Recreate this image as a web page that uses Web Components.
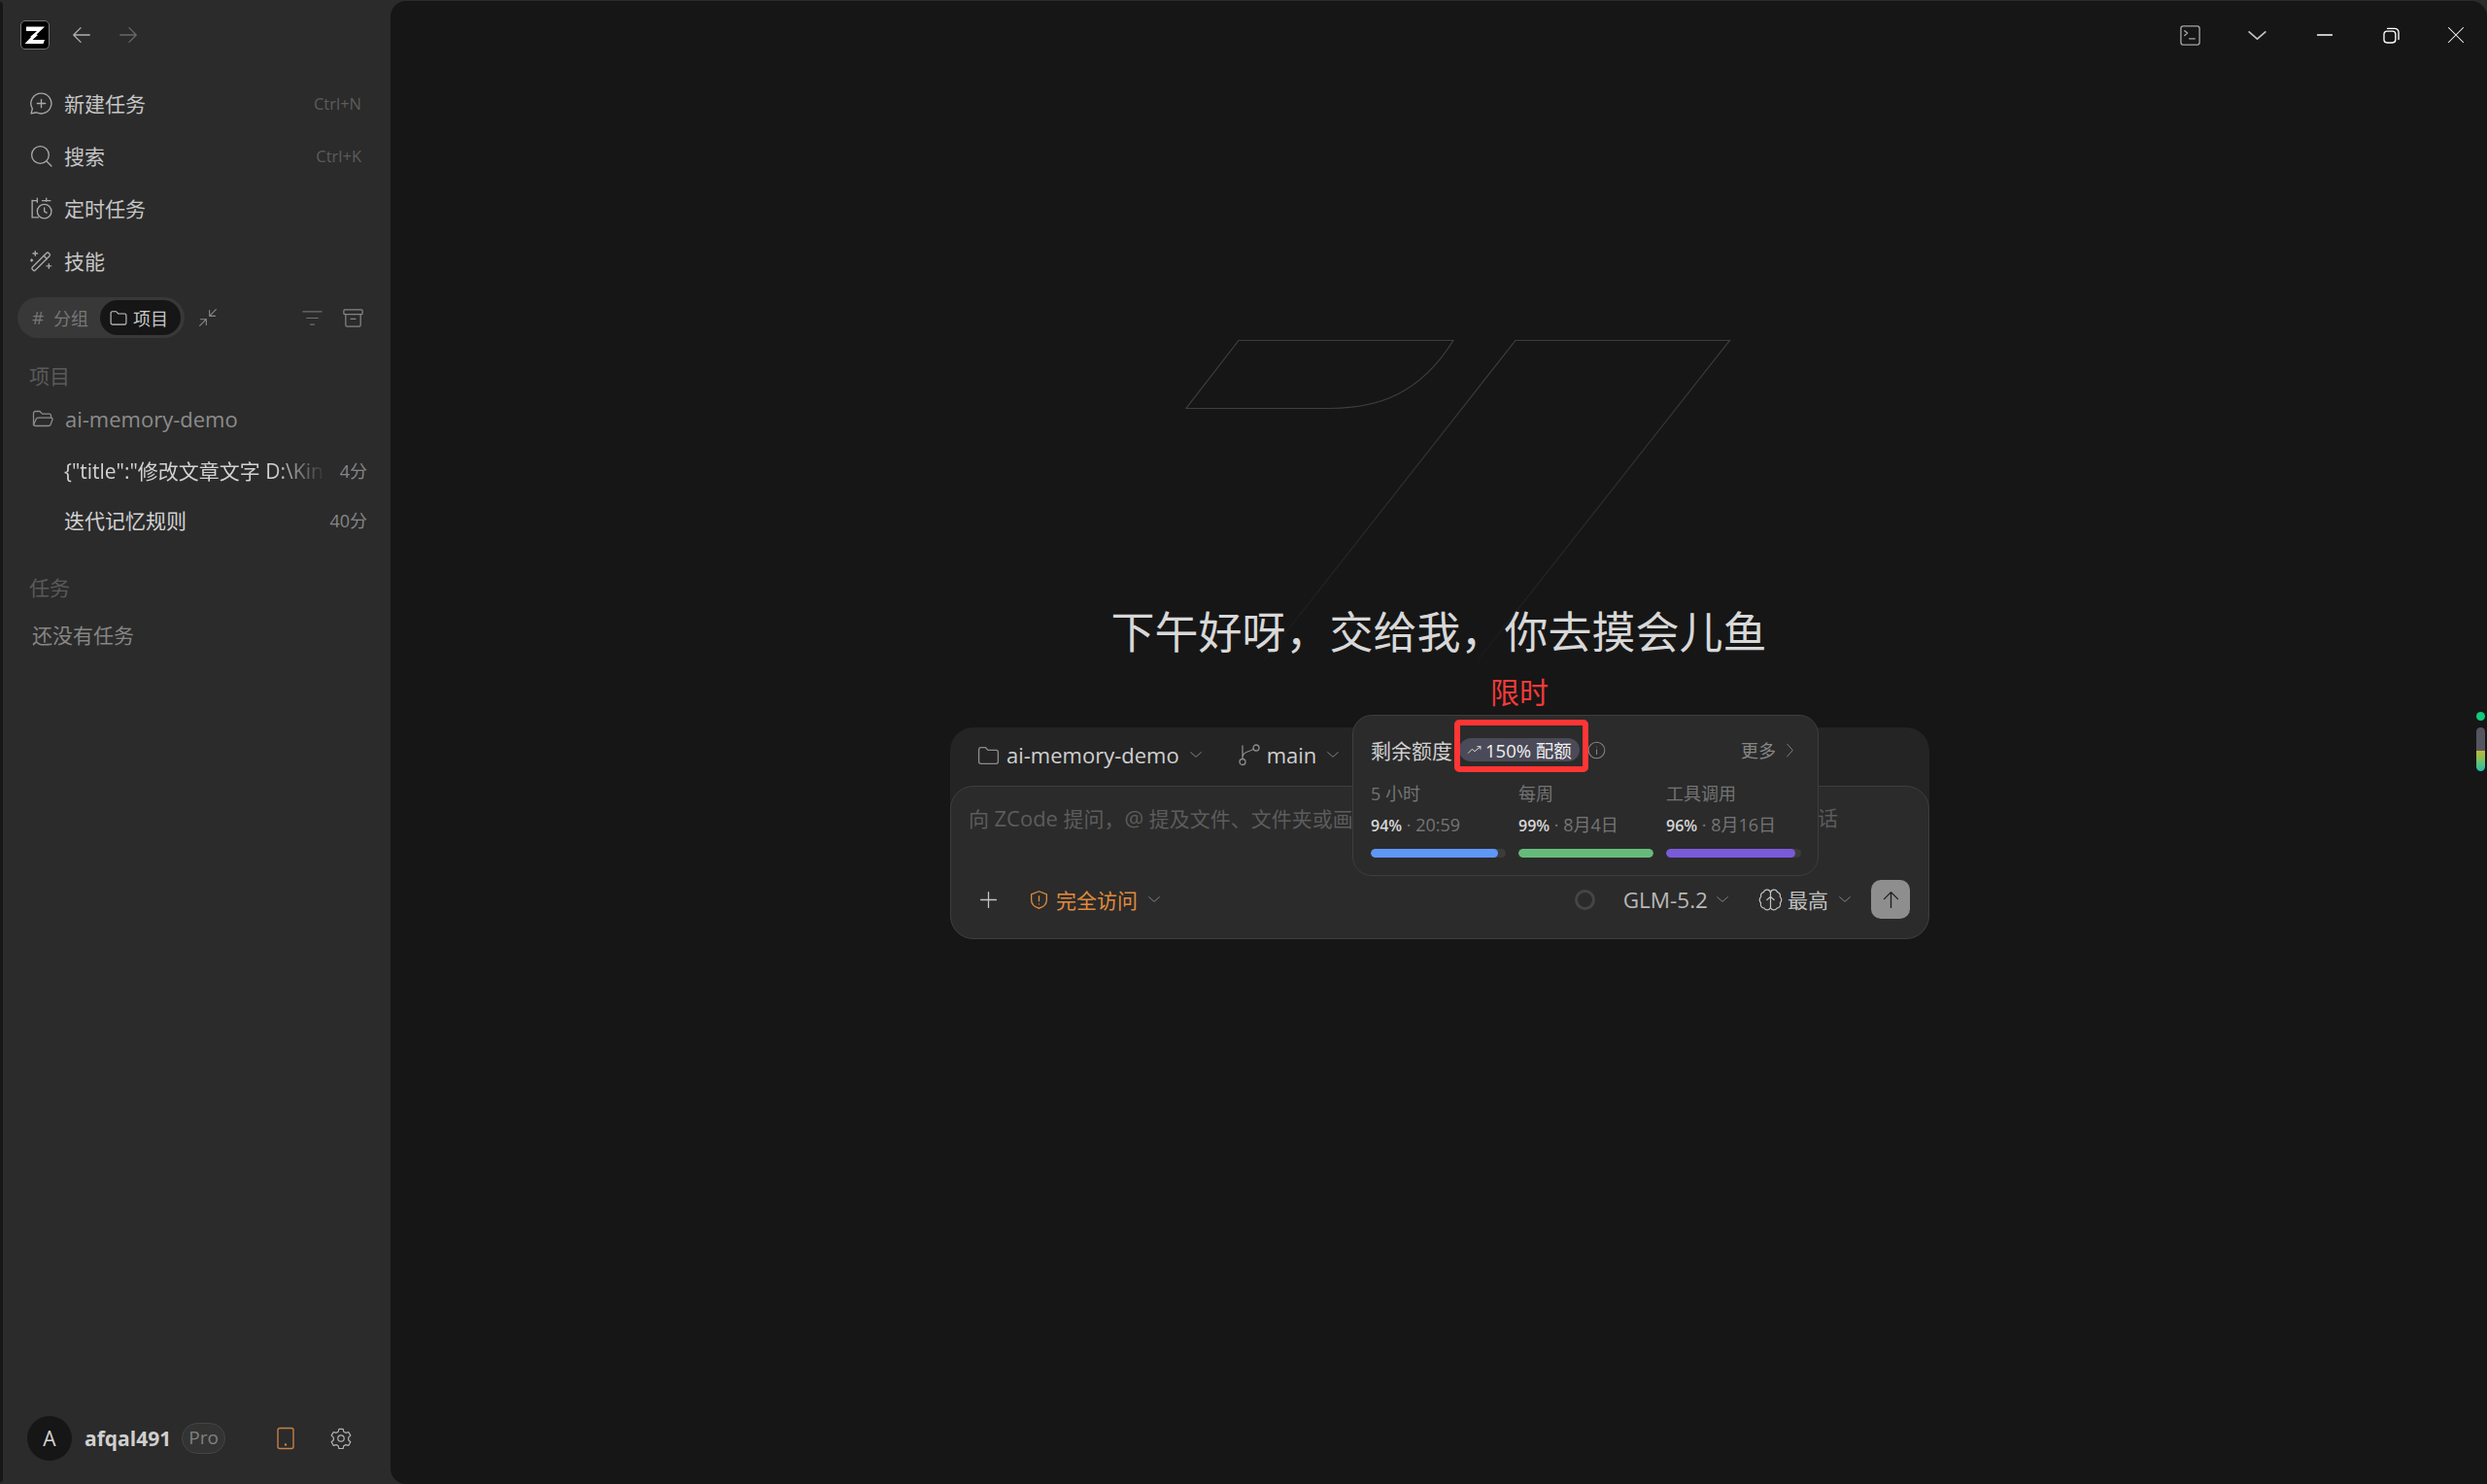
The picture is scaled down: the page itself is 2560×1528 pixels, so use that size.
<!DOCTYPE html>
<html lang="zh">
<head>
<meta charset="utf-8">
<title>ZCode</title>
<style>
    html, body { margin: 0; height: 100%; background: #161616; overflow: hidden; }
    body { font-family: "Open Sans", "Noto Sans CJK SC", sans-serif; color: #d0d0d0; }
</style>
</head>
<body>
<z-app>
    <z-sidebar slot="sidebar"></z-sidebar>
    <z-main slot="main"></z-main>
</z-app>

<script>
// Shared stroke icons, all drawn on a 24 box with currentColor
const svg = (size, body, sw = 1.3, box = 24) =>
    `<svg width="${size}" height="${size}" viewBox="0 0 ${box} ${box}" fill="none" stroke="currentColor" stroke-width="${sw}" stroke-linecap="round" stroke-linejoin="round" style="display:block;flex:none">${body}</svg>`;

const ICONS = {
    chat: '<path d="M12 2a10 10 0 1 1-4.6 18.9L2 22l1.2-4.9A10 10 0 0 1 12 2z"/><path d="M12 8v8M8 12h8"/>',
    search: '<circle cx="11" cy="11" r="8.5"/><path d="M17.5 17.5 22 22"/>',
    schedule: '<path d="M8 2v4M3 4.5h5M13 4.5h8M17 2v3M3 4v17h6"/><circle cx="15" cy="15" r="7"/><path d="M15 11.5V15l2.4 1.4"/>',
    wand: '<path d="M3.300 18.200 17 4.500a1.800 1.800 0 0 1 2.500 0l.5.500a1.800 1.800 0 0 1 0 2.500L6.300 21.200a1.800 1.800 0 0 1-2.500 0l-.5-.500a1.800 1.800 0 0 1 0-2.500z"/><path d="m14.500 7 3 3M6 2.500v4.500M3.800 4.800h4.400M19.500 15v4.500M17.300 17.200h4.400M2.500 10.500v2M1.500 11.500h2"/>',
    folder: '<path d="M2.5 6.5a2 2 0 0 1 2-2h4.600l2.400 2.600h8a2 2 0 0 1 2 2v9.400a2 2 0 0 1-2 2h-15a2 2 0 0 1-2-2z"/>',
    folderOpen: '<path d="M2.500 18V6.500a2 2 0 0 1 2-2h4.500l2.500 2.600h7a2 2 0 0 1 2 2V11"/><path d="M2.500 18.500 5.200 12.400a2 2 0 0 1 1.800-1.200h13.800a1.300 1.300 0 0 1 1.200 1.800l-2 5.300a2 2 0 0 1-1.900 1.200H4.500a2 2 0 0 1-2-1.500z"/>',
    collapse: '<path d="M14 3v7h7M14 10l8-8M3 14h7v7M10 14l-8 8"/>',
    filter: '<path d="M2 5h20M6 12h12M10 19h4"/>',
    archive: '<rect x="2" y="3" width="20" height="5" rx="1"/><path d="M4 8v11.500a1.500 1.500 0 0 0 1.500 1.500h13a1.500 1.500 0 0 0 1.500-1.500V8M9.500 13h5"/>',
    phone: '<rect x="4" y="1.500" width="16" height="21" rx="2"/><path d="M12 18.500h.01" stroke-width="2.400"/>',
    gear: '<path d="M9.700 2h4.600l.8 3.100 2.200 1.200 3.100-.9 2.300 4-2.300 2.200v2.800l2.300 2.200-2.300 4-3.100-.9-2.200 1.200-.8 3.100H9.700l-.8-3.100-2.200-1.200-3.100.9-2.300-4 2.300-2.200v-2.800L1.300 9.400l2.300-4 3.100.9 2.200-1.200z" transform="translate(0 -.500)"/><circle cx="12" cy="12" r="3.500"/>',
    chevron: '<path d="m4 8.500 8 7 8-7"/>',
    right: '<path d="m8 3 8 9-8 9"/>',
    branch: '<circle cx="5" cy="19.500" r="3"/><circle cx="19" cy="5" r="3"/><path d="M5 16.500V3M5 15c0-4 3-5.500 6.500-6.500 2.500-.7 4-1.500 4.700-2.500"/>',
    plus: '<path d="M12 3v18M3 12h18"/>',
    shield: '<path d="M12 2 21 5.500V12c0 5-3.800 8.500-9 10-5.200-1.500-9-5-9-10V5.500z"/><path d="M12 7.500v6M12 17v.01"/>',
    brain: '<path d="M12 5a3.500 3.500 0 0 0-6.800-.6A3.500 3.500 0 0 0 2.600 9 4 4 0 0 0 2.500 15a3.700 3.700 0 0 0 3.200 5.200A3.500 3.500 0 0 0 12 20V5a3.500 3.500 0 0 1 6.800-.6A3.500 3.500 0 0 1 21.400 9a4 4 0 0 1 .1 6 3.700 3.700 0 0 1-3.200 5.200A3.500 3.500 0 0 1 12 20"/><path d="m8.500 12 3.500-3 3.500 3"/>',
    up: '<path d="M12 21V3M4 11l8-8 8 8"/>',
    trend: '<path d="m2 17 6-6 4 3.500L21 7M16 7h5v4"/>',
    info: '<circle cx="12" cy="12" r="10.500"/><path d="M12 11v6M12 7.500v.01"/>',
    back: '<path d="M21 12H3M11 4l-8 8 8 8"/>',
    forward: '<path d="M3 12h18M13 4l8 8-8 8"/>',
    terminal: '<rect x="2" y="2" width="20" height="20" rx="2.500"/><path d="m6 7 3 2.500L6 12M11 15.500h6"/>',
    minimize: '<path d="M2 12h20"/>',
    restore: '<rect x="2.500" y="6.500" width="15" height="15" rx="4"/><path d="M7 3h9.500A5 5 0 0 1 21.500 8v9"/>',
    close: '<path d="m2 2 20 20M22 2 2 22"/>'
};

class ZApp extends HTMLElement {
    constructor() {
        super();
        this.attachShadow({ mode: 'open' }).innerHTML = `
            <style>
                :host { display: grid; grid-template-columns: 3px 399px 1fr; height: 1528px; background: #2b2b2b; }
                .edge { background: #161616; border-radius: 0 8px 8px 0; margin: 2px 0; }
            </style>
            <div class="edge"></div>
            <slot name="sidebar"></slot>
            <slot name="main"></slot>
        `;
    }
}

class ZNavItem extends HTMLElement {
    constructor() {
        super();
        this.attachShadow({ mode: 'open' });
    }
    connectedCallback() {
        const icon = ICONS[this.getAttribute('icon')] || '';
        const shortcut = this.getAttribute('shortcut') || '';
        this.shadowRoot.innerHTML = `
            <style>
                :host { display: flex; align-items: center; height: 54px; padding: 0 30px 0 28px; color: #c6c6c6; font-size: 21px; }
                .ic { width: 22px; display: flex; justify-content: center; margin-right: 13px; color: #a8a8a8; }
                .lb { flex: 1; }
                .sc { font-size: 16.500px; color: #5c5c5c; padding-top: 1px; }
            </style>
            <span class="ic">${svg(25, icon)}</span>
            <span class="lb"><slot></slot></span>
            <span class="sc">${shortcut}</span>
        `;
    }
}

class ZTabs extends HTMLElement {
    constructor() {
        super();
        this.attachShadow({ mode: 'open' }).innerHTML = `
            <style>
                :host { display: flex; align-items: center; height: 42px; margin: 11px 27px 0 15px; font-size: 18px; }
                .seg { display: flex; align-items: center; width: 172px; height: 42px; box-sizing: border-box; padding: 3px 4px 3px 15px; border-radius: 21px; background: #383838; color: #777; }
                .hash { width: 22px; font-size: 19px; }
                .group { flex: 1; }
                .on { display: flex; align-items: center; gap: 5px; height: 36px; padding: 0 13px 0 9px; border-radius: 18px; background: #161616; color: #c8c8c8; }
                .tools { flex: 1; display: flex; align-items: center; color: #8a8a8a; }
                .collapse { margin-left: 14px; }
                .filter { margin-left: auto; color: #707070; }
                .archive { margin-left: 19px; color: #858585; }
            </style>
            <div class="seg">
                <span class="hash">#</span><span class="group">分组</span>
                <span class="on">${svg(20, ICONS.folder)}项目</span>
            </div>
            <div class="tools">
                <span class="collapse">${svg(20, ICONS.collapse)}</span>
                <span class="filter">${svg(23, ICONS.filter)}</span>
                <span class="archive">${svg(23, ICONS.archive)}</span>
            </div>
        `;
    }
}

class ZSession extends HTMLElement {
    constructor() {
        super();
        this.attachShadow({ mode: 'open' });
    }
    connectedCallback() {
        const fade = this.hasAttribute('fade');
        this.shadowRoot.innerHTML = `
            <style>
                :host { display: flex; align-items: center; height: 51px; padding: 0 24px 0 63px; font-size: 21px; color: #d2d2d2; }
                .t { flex: 1; min-width: 0; white-space: nowrap; overflow: hidden; ${fade ? '-webkit-mask-image: linear-gradient(90deg, #000 80%, transparent 100%);' : ''} }
                .w { margin-left: 14px; font-size: 18px; color: #868686; }
            </style>
            <span class="t"><slot></slot></span>
            <span class="w">${this.getAttribute('when') || ''}</span>
        `;
    }
}

class ZSidebar extends HTMLElement {
    constructor() {
        super();
        this.attachShadow({ mode: 'open' }).innerHTML = `
            <style>
                :host { display: flex; flex-direction: column; height: 1528px; }
                header { display: flex; align-items: center; height: 71px; padding: 0 18px; box-sizing: border-box; margin-bottom: 8px; }
                .back { margin-left: 22px; color: #b0b0b0; }
                .fwd { margin-left: 26px; color: #686868; }
                .label { height: 40px; line-height: 40px; padding-left: 27px; font-size: 21px; color: #5a5a5a; }
                .project { display: flex; align-items: center; gap: 11px; height: 48px; padding-left: 29px; font-size: 22px; color: #8c8c8c; }
                .empty { height: 48px; line-height: 48px; padding-left: 30px; margin-top: 5px; font-size: 21px; color: #868686; }
                footer { display: flex; align-items: center; height: 94px; margin-top: auto; padding: 0 25px; }
                .avatar { width: 46px; height: 46px; border-radius: 50%; background: #161616; color: #d4d4d4; font-size: 21px; display: flex; align-items: center; justify-content: center; }
                .name { margin-left: 13px; font-size: 21px; font-weight: 700; color: #cfcfcf; }
                .pro { margin-left: 11px; height: 32px; line-height: 29px; box-sizing: border-box; padding: 0 6px; border: 1px solid #444; border-radius: 16px; background: #333; color: #808080; font-size: 19px; }
                .phone { margin-left: 50px; color: #c77f45; }
                .gear { margin-left: 34px; color: #b4b4b4; }
            </style>
            <header>
                <svg width="30" height="30" viewBox="0 0 30 30" style="flex:none">
                    <rect x=".5" y=".5" width="29" height="29" rx="4.500" fill="#000" stroke="#777"/>
                    <path d="M6 6.500h19l-11 10.500h-4L17 11H6z M4.500 24 14 14l4 1-5.500 5H25l-1.500 4z" fill="#fff"/>
                </svg>
                <span class="back">${svg(22, ICONS.back, 1.4)}</span>
                <span class="fwd">${svg(22, ICONS.forward, 1.4)}</span>
            </header>
            <z-nav-item icon="chat" shortcut="Ctrl+N">新建任务</z-nav-item>
            <z-nav-item icon="search" shortcut="Ctrl+K">搜索</z-nav-item>
            <z-nav-item icon="schedule">定时任务</z-nav-item>
            <z-nav-item icon="wand">技能</z-nav-item>
            <z-tabs></z-tabs>
            <div class="label" style="margin-top:19px">项目</div>
            <div class="project">${svg(24, ICONS.folderOpen)}ai-memory-demo</div>
            <z-session when="4分" fade style="margin-top:3px">{"title":"修改文章文字 D:\\Kin</z-session>
            <z-session when="40分">迭代记忆规则</z-session>
            <div class="label" style="margin-top:25px">任务</div>
            <div class="empty">还没有任务</div>
            <footer>
                <span class="avatar">A</span>
                <span class="name">afqal491</span>
                <span class="pro">Pro</span>
                <span class="phone">${svg(24, ICONS.phone, 1.400)}</span>
                <span class="gear">${svg(22, ICONS.gear)}</span>
            </footer>
        `;
    }
}

class ZWindowControls extends HTMLElement {
    constructor() {
        super();
        this.attachShadow({ mode: 'open' }).innerHTML = `
            <style>
                :host { position: absolute; top: 0; right: 0; display: flex; height: 70px; }
                span { width: 69px; display: flex; align-items: center; justify-content: center; color: #fff; }
                span:last-child { width: 64px; }
                .term { color: #a6a6a6; }
                .chev { color: #c0c0c0; }
            </style>
            <span class="term">${svg(23, ICONS.terminal, 1.400)}</span>
            <span class="chev">${svg(25, ICONS.chevron, 1.700)}</span>
            <span>${svg(18, ICONS.minimize, 1.700)}</span>
            <span>${svg(19, ICONS.restore, 1.700)}</span>
            <span>${svg(18, ICONS.close, 1.400)}</span>
        `;
    }
}

class ZQuotaMeter extends HTMLElement {
    constructor() {
        super();
        this.attachShadow({ mode: 'open' });
    }
    connectedCallback() {
        const pct = this.getAttribute('pct');
        this.shadowRoot.innerHTML = `
            <style>
                :host { display: block; min-width: 0; }
                .label { height: 24px; line-height: 24px; font-size: 18px; color: #747474; }
                .val { height: 24px; line-height: 24px; margin-top: 8px; font-size: 18px; color: #757575; white-space: nowrap; }
                b { font-size: 16px; font-weight: 600; color: #d8d8d8; }
                .track { height: 9px; margin-top: 13px; border-radius: 5px; background: #3b3b3b; overflow: hidden; }
                .fill { height: 100%; border-radius: 5px; width: ${this.getAttribute('fill') || pct}; background: ${this.getAttribute('color')}; }
            </style>
            <div class="label">${this.getAttribute('label')}</div>
            <div class="val"><b>${pct}</b> · ${this.getAttribute('until')}</div>
            <div class="track"><div class="fill"></div></div>
        `;
    }
}

class ZQuotaCard extends HTMLElement {
    constructor() {
        super();
        this.attachShadow({ mode: 'open' }).innerHTML = `
            <style>
                :host { position: absolute; left: 414px; top: -13px; z-index: 2; display: block; width: 480px; height: 166px; box-sizing: border-box; padding: 19px 17px 0 18px; border: 1px solid #3e3e3e; border-radius: 20px; background: #2b2b2b; }
                .head { display: flex; align-items: center; height: 32px; }
                .title { font-size: 21px; color: #d0d0d0; }
                .pill { display: flex; align-items: center; gap: 3px; height: 24px; margin-left: 7px; padding: 0 8px; border-radius: 12px; background: #4a4a58; color: #f0f0f0; font-size: 18.500px; white-space: nowrap; }
                .info { margin-left: 8px; color: #858585; }
                .more { display: flex; align-items: center; gap: 6px; margin-left: auto; margin-right: 3px; font-size: 18px; color: #868686; }
                .grid { display: grid; grid-template-columns: repeat(3, 1fr); gap: 13px; margin-top: 17px; }
                .mark { position: absolute; left: 104px; top: 4px; width: 138px; height: 54px; box-sizing: border-box; border: 6px solid #ff3535; border-radius: 5px; }
                .note { position: absolute; left: 141px; top: -44px; font-size: 30px; line-height: 40px; color: #f43a3a; white-space: nowrap; }
            </style>
            <div class="head">
                <span class="title">剩余额度</span>
                <span class="pill">${svg(16, ICONS.trend)}150% 配额</span>
                <span class="info">${svg(19, ICONS.info)}</span>
                <span class="more">更多${svg(17, ICONS.right)}</span>
            </div>
            <div class="grid">
                <z-quota-meter label="5 小时" pct="94%" until="20:59" color="#5f97f6"></z-quota-meter>
                <z-quota-meter label="每周" pct="99%" fill="100%" until="8月4日" color="#66bb7a"></z-quota-meter>
                <z-quota-meter label="工具调用" pct="96%" until="8月16日" color="#7a5ad8"></z-quota-meter>
            </div>
            <div class="mark"></div>
            <div class="note">限时</div>
        `;
    }
}

class ZComposer extends HTMLElement {
    constructor() {
        super();
        this.attachShadow({ mode: 'open' }).innerHTML = `
            <style>
                :host { position: relative; display: block; width: 1008px; height: 218px; margin-left: 2px; border-radius: 24px; background: #242424; }
                .ctx { display: flex; align-items: center; height: 60px; padding: 0 0 4px 27px; box-sizing: border-box; font-size: 22px; color: #d0d0d0; }
                .ctx .fold { color: #8c8c8c; margin-right: 6px; }
                .ctx .br { color: #8c8c8c; margin: 0 6px 0 35px; }
                .chev { color: #909090; margin-left: 9px; }
                .box { height: 158px; box-sizing: border-box; border: 1px solid #3e3e3e; border-radius: 24px; background: #2b2b2b; display: flex; flex-direction: column; }
                .ph { display: flex; height: 64px; line-height: 64px; padding: 0 93px 0 18px; font-size: 21px; color: #5c5c5c; white-space: nowrap; }
                .ph .lat { font-size: 22px; }
                .ph span.cut { width: 394px; overflow: hidden; }
                .ph span.end { margin-left: auto; }
                .bar { display: flex; align-items: center; height: 40px; margin-top: 32px; padding: 0 19px 0 28px; font-size: 21px; }
                .plus { color: #c4c4c4; margin-right: 31px; }
                .access { display: flex; align-items: center; gap: 7px; color: #e08a3c; }
                .ring { margin-left: auto; width: 21px; height: 21px; box-sizing: border-box; border: 3px solid #454545; border-radius: 50%; }
                .model { margin-left: 29px; font-size: 22.500px; color: #b8b8b8; }
                .brain { margin-left: 29px; margin-right: 5px; color: #c0c0c0; }
                .eff { color: #c0c0c0; }
                .send { margin-left: 19px; width: 40px; height: 40px; border-radius: 10px; background: #8e8e8e; color: #1c1c1c; display: flex; align-items: center; justify-content: center; }
            </style>
            <div class="ctx">
                <span class="fold">${svg(25, ICONS.folder)}</span>ai-memory-demo<span class="chev">${svg(16, ICONS.chevron)}</span>
                <span class="br">${svg(24, ICONS.branch)}</span>main<span class="chev">${svg(16, ICONS.chevron)}</span>
            </div>
            <div class="box">
                <div class="ph"><span class="cut">向 <span class="lat">ZCode</span> 提问，<span class="lat">@</span> 提及文件、文件夹或画</span><span class="end">话</span></div>
                <div class="bar">
                    <span class="plus">${svg(21, ICONS.plus, 1.500)}</span>
                    <span class="access">${svg(21, ICONS.shield, 1.500)}完全访问<span class="chev" style="margin-left:2px">${svg(16, ICONS.chevron)}</span></span>
                    <span class="ring"></span>
                    <span class="model">GLM-5.2</span><span class="chev" style="margin-left:7px">${svg(16, ICONS.chevron)}</span>
                    <span class="brain">${svg(25, ICONS.brain, 1.200)}</span><span class="eff">最高</span><span class="chev">${svg(16, ICONS.chevron)}</span>
                    <span class="send">${svg(21, ICONS.up, 1.500)}</span>
                </div>
            </div>
            <z-quota-card></z-quota-card>
        `;
    }
}

class ZMain extends HTMLElement {
    constructor() {
        super();
        this.attachShadow({ mode: 'open' }).innerHTML = `
            <style>
                :host { position: relative; display: flex; flex-direction: column; align-items: center; height: 1527px; margin-top: 1px; box-sizing: border-box; padding-top: 618px; border-radius: 16px 16px 0 16px; background: #161616; overflow: hidden; }
                .mark { position: absolute; left: 798px; top: 339px; }
                h1 { position: relative; margin: 0 0 66px; height: 64px; line-height: 64px; font-size: 45px; font-weight: 400; color: #d8d8d8; white-space: nowrap; }
                .status { position: absolute; left: 2147px; top: 732px; display: flex; flex-direction: column; align-items: center; gap: 7px; }
                .dot { width: 9px; height: 9px; border-radius: 50%; background: #12c97c; }
                .rail { width: 9px; height: 45px; border-radius: 5px; background: linear-gradient(#55555f 0 53%, #c4b835 53%, #6cc26a 78%, #22bfb0 100%); }
            </style>
            <svg class="mark" width="600" height="350" viewBox="1200 340 600 350" fill="none" stroke-width="1.200">
                <defs>
                    <linearGradient id="fade" gradientUnits="userSpaceOnUse" x1="0" y1="350" x2="0" y2="680">
                        <stop offset="0" stop-color="#3e3e3e"/>
                        <stop offset="1" stop-color="#1a1a1a"/>
                    </linearGradient>
                </defs>
                <path stroke="#3e3e3e" d="M1275 350.500H1496C1462 405 1420 420 1370 420.500H1221z"/>
                <path stroke="url(#fade)" d="M1301 680 1560 350.500H1780.500L1521 680"/>
            </svg>
            <h1>下午好呀，交给我，你去摸会儿鱼</h1>
            <z-composer></z-composer>
            <z-window-controls></z-window-controls>
            <div class="status"><span class="dot"></span><span class="rail"></span></div>
        `;
    }
}

// Children first, so nested elements are ready when the shell upgrades
customElements.define('z-nav-item', ZNavItem);
customElements.define('z-tabs', ZTabs);
customElements.define('z-session', ZSession);
customElements.define('z-sidebar', ZSidebar);
customElements.define('z-window-controls', ZWindowControls);
customElements.define('z-quota-meter', ZQuotaMeter);
customElements.define('z-quota-card', ZQuotaCard);
customElements.define('z-composer', ZComposer);
customElements.define('z-main', ZMain);
customElements.define('z-app', ZApp);
</script>
</body>
</html>
